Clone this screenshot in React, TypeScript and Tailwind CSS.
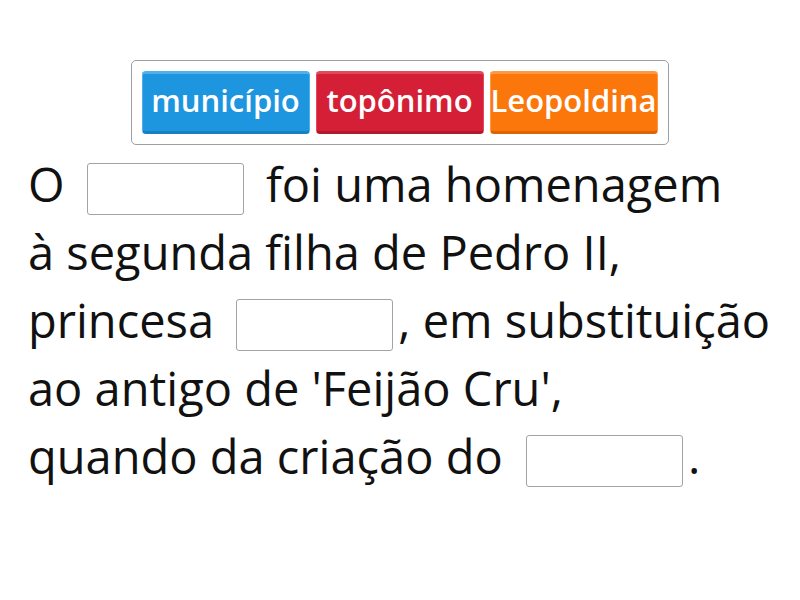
import React from 'react';

const words = [
  { label: 'município', cls: 'bg-[#1d95df] border-[#4fb0ec] border-b-[#1680c4]' },
  { label: 'topônimo', cls: 'bg-[#d41f36] border-[#e04a5c] border-b-[#b3192d]' },
  { label: 'Leopoldina', cls: 'bg-[#fb770b] border-[#ff9844] border-b-[#dc6506]' },
];

function Blank({ className = '' }: { className?: string }) {
  return (
    <span
      className={`inline-block align-middle w-[157px] h-[52px] bg-white border border-[#a3a3a3] rounded-[3px] ${className}`}
    />
  );
}

export default function App() {
  return (
    <div
      className="w-[800px] h-[600px] bg-white text-black overflow-hidden"
      style={{ fontFamily: '"Open Sans", "Noto Sans", sans-serif' }}
    >
      <div className="flex justify-center pt-[60px]">
        <div className="flex gap-[6px] p-[10px] border border-[#9aa0a6] rounded-[5px] ml-[-1px]">
          {words.map((w) => (
            <div
              key={w.label}
              className={`flex items-center justify-center w-[168px] h-[63px] pb-[5px] rounded-[4px] border border-t-[3px] border-b-[3px] text-white font-semibold text-[31px] leading-none ${w.cls}`}
            >
              {w.label}
            </div>
          ))}
        </div>
      </div>
      <p className="pl-[28px] pt-[5px] text-[47px] leading-[68px] text-[#111]">
        O <Blank className="ml-[10px] mr-[10px]" /> foi uma homenagem
        <br />
        à segunda filha de Pedro II,
        <br />
        princesa <Blank className="ml-[10px] mr-[5px]" />, em substituição
        <br />
        ao antigo de 'Feijão Cru',
        <br />
        quando da criação do <Blank className="ml-[11px] mr-[5px]" />.
      </p>
    </div>
  );
}
